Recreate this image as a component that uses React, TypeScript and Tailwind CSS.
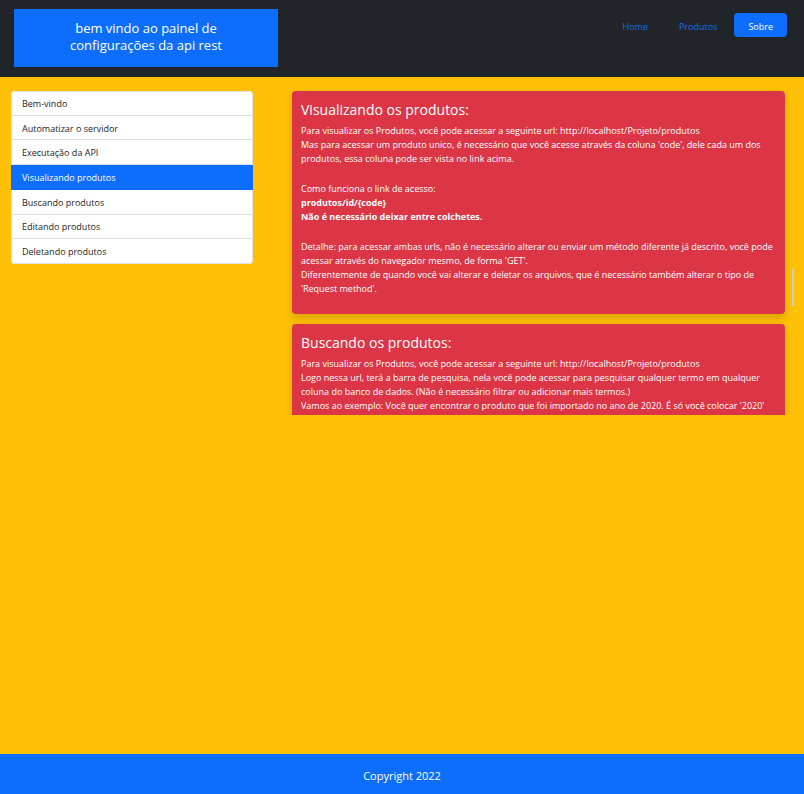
import { useState } from "react";
import type { ReactNode } from "react";

const navItems = ["Home", "Produtos", "Sobre"];

const topics = [
  "Bem-vindo",
  "Automatizar o servidor",
  "Executação da API",
  "Visualizando produtos",
  "Buscando produtos",
  "Editando produtos",
  "Deletando produtos",
];

function Card({ title, children }: { title: string; children: ReactNode }) {
  return (
    <section className="rounded-[4px] bg-[#dc3545] px-[9px] pt-[10px] pb-[18px] text-white shadow-[0_5px_10px_rgba(0,0,0,0.15)]">
      <h2 className="mb-[5px] text-[14px] leading-[18px]">{title}</h2>
      <div className="flex flex-col gap-4 leading-[14px]">{children}</div>
    </section>
  );
}

export default function App() {
  const [active, setActive] = useState("Visualizando produtos");

  return (
    <div className="flex min-h-screen flex-col bg-[#ffc107] font-['Open_Sans','Noto_Sans',sans-serif] text-[9px] leading-[14px] text-[#212529]">
      <header className="flex items-start justify-between bg-[#212529] pt-[9px] pr-[17px] pb-[10px] pl-[14px]">
        <h1 className="w-[264px] bg-[#0d6efd] px-[40px] pt-[11px] pb-[13px] text-center text-[13px] leading-[17px] text-white">
          bem vindo ao painel de
          <br />
          configurações da api rest
        </h1>
        <nav className="flex gap-[3px] pt-[4px]">
          {navItems.map((item) => (
            <a
              key={item}
              href="#"
              className={
                item === "Sobre"
                  ? "rounded-[4px] bg-[#0d6efd] px-[14px] pt-[7px] pb-[3px] text-white"
                  : "px-[14px] pt-[7px] pb-[3px] text-[#0d6efd]"
              }
            >
              {item}
            </a>
          ))}
        </nav>
      </header>

      <main className="grid flex-1 grid-cols-[1fr_2fr] items-start pt-[14px]">
        <div className="pr-[15px] pl-[11px]">
          <ul className="grid h-[173px] auto-rows-fr overflow-hidden rounded-[4px] bg-white">
            {topics.map((topic) => (
              <li key={topic} className="group flex">
                <button
                  type="button"
                  onClick={() => setActive(topic)}
                  className={
                    topic === active
                      ? "w-full bg-[#0d6efd] px-[11px] pt-[2px] text-left text-white"
                      : "w-full border-x border-b border-[#dfdfdf] px-[10px] pt-[2px] text-left group-first:rounded-t-[4px] group-first:border-t group-last:rounded-b-[4px]"
                  }
                >
                  {topic}
                </button>
              </li>
            ))}
          </ul>
        </div>

        <div className="flex items-end pr-[10px]">
          <div className="-mt-[14px] flex h-[338px] flex-1 flex-col gap-[10px] overflow-y-auto pt-[14px] pr-[7px] pl-[24px] [scrollbar-width:none]">
            <Card title="Visualizando os produtos:">
              <p>
                Para visualizar os Produtos, você pode acessar a seguinte url: http://localhost/Projeto/produtos
                <br />
                Mas para acessar um produto unico, é necessário que você acesse através da coluna 'code', dele cada um dos
                produtos, essa coluna pode ser vista no link acima.
              </p>
              <p>
                Como funciona o link de acesso:
                <br />
                <b>
                  produtos/id/{"{code}"}
                  <br />
                  Não é necessário deixar entre colchetes.
                </b>
              </p>
              <p>
                Detalhe: para acessar ambas urls, não é necessário alterar ou enviar um método diferente já descrito, você pode
                acessar através do navegador mesmo, de forma 'GET'.
                <br />
                Diferentemente de quando você vai alterar e deletar os arquivos, que é necessário também alterar o tipo de
                'Request method'.
              </p>
            </Card>
            <Card title="Buscando os produtos:">
              <p>
                Para visualizar os Produtos, você pode acessar a seguinte url: http://localhost/Projeto/produtos
                <br />
                Logo nessa url, terá a barra de pesquisa, nela você pode acessar para pesquisar qualquer termo em qualquer
                coluna do banco de dados. (Não é necessário filtrar ou adicionar mais termos.)
                <br />
                Vamos ao exemplo: Você quer encontrar o produto que foi importado no ano de 2020. É só você colocar '2020'
              </p>
            </Card>
          </div>
          <div className="mb-[109px] h-[37px] w-[2px] bg-[#cccccc]" />
        </div>
      </main>

      <footer className="bg-[#0d6efd] pt-[14px] pb-[10px] text-center text-[11px] leading-[16px] text-white">
        Copyright 2022
      </footer>
    </div>
  );
}
